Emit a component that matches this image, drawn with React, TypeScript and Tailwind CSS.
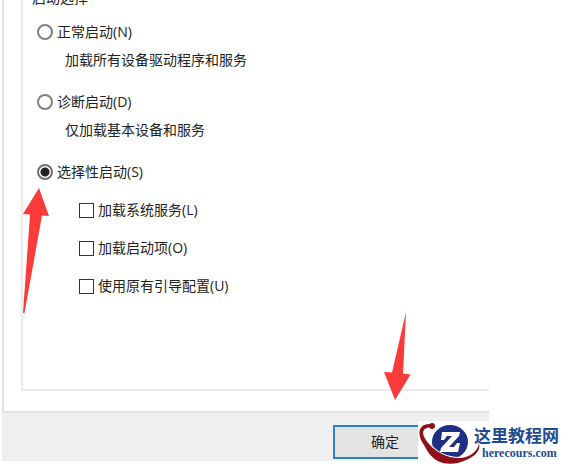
import React from 'react';

const startupModes = [
  { id: 'normal', label: '正常启动(N)', hint: '加载所有设备驱动程序和服务' },
  { id: 'diagnostic', label: '诊断启动(D)', hint: '仅加载基本设备和服务' },
];

const selectiveOptions = [
  { id: 'services', label: '加载系统服务(L)' },
  { id: 'items', label: '加载启动项(O)' },
  { id: 'boot', label: '使用原有引导配置(U)' },
];

const radioClass =
  'size-4 shrink-0 appearance-none rounded-full border-2 border-[#808080] bg-white checked:border-[#707070] checked:bg-[radial-gradient(circle,#222_0_4px,white_5px)]';

const ModeRadio: React.FC<{ id: string; label: string; checked?: boolean }> = ({ id, label, checked }) => (
  <div className="flex h-5 items-center gap-1">
    <input id={id} type="radio" name="startup" defaultChecked={checked} className={radioClass} />
    <label htmlFor={id}>{label}</label>
  </div>
);

const StartupOptions: React.FC = () => (
  <fieldset className="-mt-3 ml-[17px] border-2 border-r-0 border-[#ebebeb] pb-[93px] pl-[14px]">
    <legend className="ml-[-7px] px-[2px] leading-5">启动选择</legend>
    <div className="flex flex-col gap-[22px] pt-[14px]">
      {startupModes.map((mode) => (
        <div key={mode.id}>
          <ModeRadio id={mode.id} label={mode.label} />
          <p className="mt-2 pl-7">{mode.hint}</p>
        </div>
      ))}
      <div>
        <ModeRadio id="selective" label="选择性启动(S)" checked />
        <div className="mt-[18px] flex flex-col gap-[18px] pl-[42px]">
          {selectiveOptions.map((option) => (
            <div key={option.id} className="flex h-5 items-center gap-1">
              <input
                id={option.id}
                type="checkbox"
                className="size-[15px] shrink-0 appearance-none border border-[#333] bg-white"
              />
              <label htmlFor={option.id}>{option.label}</label>
            </div>
          ))}
        </div>
      </div>
    </div>
  </fieldset>
);

const Arrows: React.FC = () => (
  <svg className="pointer-events-none absolute top-0 left-0" width="420" height="410" fill="#fb3a3a" aria-hidden="true">
    <path d="M39 188 L49 216 L42 215.5 L24.5 313 L23 313 L30 214.5 L23 214 Z" />
    <path d="M406 312 L403 373.5 L410.5 374.5 L395 400 L384 372 L392 372.5 Z" />
  </svg>
);

const SiteBadge: React.FC = () => (
  <div className="absolute top-[421px] right-0 flex h-[43px] w-[147px] items-center bg-white">
    <svg className="-mr-2 shrink-0" width="64" height="43" viewBox="0 0 64 43" aria-hidden="true">
      <ellipse cx="32" cy="21" rx="18" ry="17" fill="#1f2f86" />
      <path
        d="M24 11 L42 11 L41 15 L31 26 L36 26 L39 22 L42 22 L40 31 L22 31 L23 27 L34 15 L29 15 L26 19 L23 19 Z"
        fill="#fff"
      />
      <path
        d="M13 3 C-1 2 -1 15 6 24 C9 29 11 34 18 39 C28 45 40 43 48 39 C56 36 63 30 61 22 C60 31 50 37 41 37 C29 37 18 31 11 23 C4 15 2 8 12 6 Z"
        fill="#8e1018"
        stroke="#fff"
        strokeWidth="2"
        paintOrder="stroke"
      />
      <circle cx="14" cy="5" r="3" fill="#8e1018" />
    </svg>
    <div className="text-[#1f4a94]">
      <p className="font-['Noto_Sans_CJK_SC',sans-serif] text-[17px] leading-5 font-bold">这里教程网</p>
      <p className="pl-2 font-['Liberation_Serif',serif] text-xs leading-4 font-bold">herecours.com</p>
    </div>
  </div>
);

const App: React.FC = () => (
  <div className="relative overflow-hidden bg-white pb-[3px] font-['Open_Sans','Noto_Sans_CJK_SC',sans-serif] text-sm leading-5 text-[#222]">
    <main className="mr-[76px] ml-[2px]">
      <section className="border-b-2 border-l-2 border-[#e2e2e2] pb-5">
        <StartupOptions />
      </section>
      <footer className="flex h-12 justify-end bg-[#efefef] pt-3">
        <button type="button" className="h-[34px] w-[156px] border-2 border-r-0 border-[#2e80c4] bg-[#e3e3e3] pr-[54px]">
          确定
        </button>
      </footer>
    </main>
    <Arrows />
    <SiteBadge />
  </div>
);

export default App;
